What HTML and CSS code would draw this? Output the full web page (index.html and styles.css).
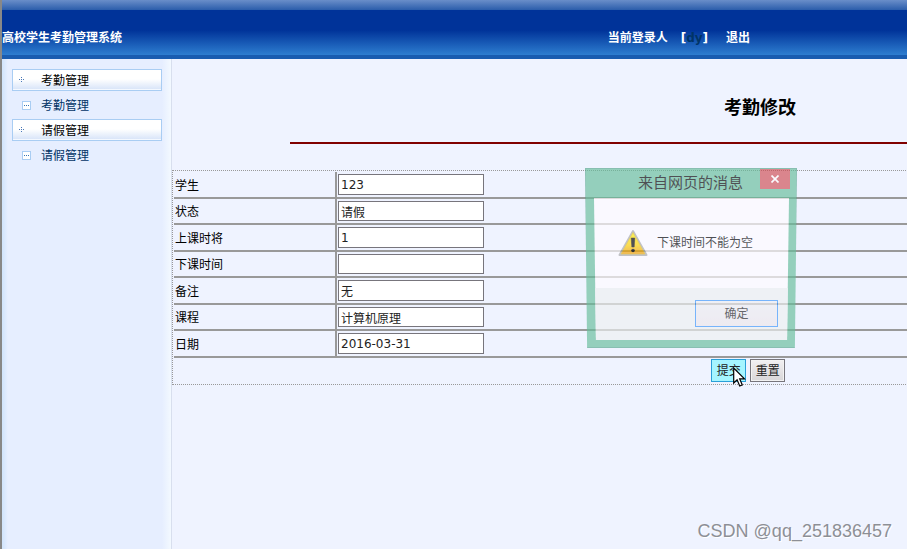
FILE: index.html
```html
<!DOCTYPE html>
<html lang="zh-CN">
  <head>
    <meta charset="utf-8">
    <title>高校学生考勤管理系统</title>
    <link rel="stylesheet" href="styles.css">
  </head>
  <body>
    <div class="page">
      <header class="header">
        <div class="header-strip"></div>
        <div class="header-bar">
          <span class="site-name">高校学生考勤管理系统</span>
          <div class="user">
            <span>当前登录人</span>
            <span>[<span class="user-name">dy</span>]</span>
            <a class="logout" href="#">退出</a>
          </div>
        </div>
      </header>

      <div class="content">
        <nav class="sidebar">
          <a class="menu-title" href="#">
            <svg class="menu-icon" width="5" height="5" viewBox="0 0 5 5" fill="#4a78b8">
              <path d="M2 0h1v1h-1zM0 2h1v1h-1zM2 2h1v1h-1zM4 2h1v1h-1zM2 4h1v1h-1z" />
            </svg>
            考勤管理
          </a>
          <a class="menu-item" href="#">
            <svg class="menu-icon" width="9" height="9" viewBox="0 0 9 9">
              <rect x=".5" y=".5" width="8" height="8" fill="#fff" stroke="#a9cdf3" />
              <path d="M2 4h1v1h-1zM4 4h1v1h-1zM6 4h1v1h-1z" fill="#3674b5" />
            </svg>
            考勤管理
          </a>
          <a class="menu-title" href="#">
            <svg class="menu-icon" width="5" height="5" viewBox="0 0 5 5" fill="#4a78b8">
              <path d="M2 0h1v1h-1zM0 2h1v1h-1zM2 2h1v1h-1zM4 2h1v1h-1zM2 4h1v1h-1z" />
            </svg>
            请假管理
          </a>
          <a class="menu-item" href="#">
            <svg class="menu-icon" width="9" height="9" viewBox="0 0 9 9">
              <rect x=".5" y=".5" width="8" height="8" fill="#fff" stroke="#a9cdf3" />
              <path d="M2 4h1v1h-1zM4 4h1v1h-1zM6 4h1v1h-1z" fill="#3674b5" />
            </svg>
            请假管理
          </a>
        </nav>

        <main class="main">
          <h2>考勤修改</h2>
          <hr>
          <form>
            <table class="form-table">
              <tr>
                <td class="label"><label for="student">学生</label></td>
                <td><input type="text" id="student" value="123"></td>
              </tr>
              <tr>
                <td class="label"><label for="status">状态</label></td>
                <td><input type="text" id="status" value="请假"></td>
              </tr>
              <tr>
                <td class="label"><label for="start">上课时将</label></td>
                <td><input type="text" id="start" value="1"></td>
              </tr>
              <tr>
                <td class="label"><label for="end">下课时间</label></td>
                <td><input type="text" id="end" value=""></td>
              </tr>
              <tr>
                <td class="label"><label for="remark">备注</label></td>
                <td><input type="text" id="remark" value="无"></td>
              </tr>
              <tr>
                <td class="label"><label for="course">课程</label></td>
                <td><input type="text" id="course" value="计算机原理"></td>
              </tr>
              <tr>
                <td class="label"><label for="date">日期</label></td>
                <td><input type="text" id="date" value="2016-03-31"></td>
              </tr>
              <tr>
                <td class="actions" colspan="2">
                  <div class="buttons">
                    <button class="button submit" type="button">提交
                      <svg class="cursor" width="13" height="20" viewBox="0 0 13 20">
                        <path d="M.7 1v15l3.4-3.3 2.6 6.3 2.6-1.1-2.6-6h4.8z" fill="#fff" stroke="#000" stroke-width="1.2" />
                      </svg>
                    </button>
                    <button class="button" type="reset">重置</button>
                  </div>
                </td>
              </tr>
            </table>
          </form>
        </main>
      </div>
    </div>

    <div class="dialog" role="dialog" aria-labelledby="dialog-title">
      <div class="dialog-head">
        <span id="dialog-title">来自网页的消息</span>
        <button class="close" type="button" aria-label="关闭">
          <svg width="8" height="8" viewBox="0 0 8 8">
            <path d="M.5.5l7 7M7.5.5l-7 7" stroke="#fff" stroke-width="1.7" />
          </svg>
        </button>
      </div>
      <div class="dialog-body">
        <div class="message">
          <svg width="30" height="28" viewBox="0 0 30 28">
            <defs>
              <linearGradient id="warn" x1="0" y1="0" x2="0" y2="1">
                <stop offset="0" stop-color="#fff000" />
                <stop offset=".6" stop-color="#ffd000" />
                <stop offset="1" stop-color="#f09800" />
              </linearGradient>
            </defs>
            <path d="M15 2L28.5 26h-27z" fill="#ddd" stroke="#aaa" stroke-width="2" stroke-linejoin="round" />
            <path d="M15 3.5L27 25h-24z" fill="url(#warn)" stroke="#e0b800" stroke-width=".6" />
            <path d="M13.2 9h3.6l-.6 9h-2.4z" fill="#000" stroke="#000" stroke-width=".5" />
            <circle cx="15" cy="21.5" r="1.8" fill="#000" />
          </svg>
          <span>下课时间不能为空</span>
        </div>
        <div class="dialog-foot">
          <button class="ok" type="button">确定</button>
        </div>
      </div>
    </div>

    <div class="watermark">CSDN @qq_251836457</div>
  </body>
</html>
```

FILE: styles.css
```css
* {
  box-sizing: border-box;
}
body {
  margin: 0;
  min-height: 100vh;
  overflow: hidden;
  border-left: 2px solid #888;
  background-color: #eff3ff;
  font-family: "DejaVu Sans", "Noto Sans CJK SC", sans-serif;
  font-size: 12px;
  line-height: 16px;
  color: #000;
}
a {
  text-decoration: none;
}
button,
input {
  font: inherit;
  color: #222;
}
.page {
  display: flex;
  flex-direction: column;
  min-width: 1346px;
  min-height: 100vh;
}

/* header */
.header-strip {
  height: 10px;
  background: linear-gradient(#6a8ec9, #2b5dab);
}
.header-bar {
  display: flex;
  align-items: center;
  height: 49px;
  padding-top: 10px;
  border-bottom: 4px solid #195cb0;
  background: linear-gradient(#003399 45%, #2e7ed0);
  color: #fff;
  font-weight: bold;
}
.site-name {
  width: 45%;
}
.user {
  display: flex;
}
.user > span {
  margin-right: 13px;
}
.user-name {
  color: #003366;
}
.logout {
  margin-left: 5px;
  color: #fff;
}

/* left menu */
.content {
  display: flex;
  flex: 1;
}
.sidebar {
  flex: none;
  width: 170px;
  padding: 10px;
  border-right: 1px solid #d8dfee;
  background: linear-gradient(to right, #d0e4fc, #e6eeff 6px, #e6eeff 160px, #f3f9ff 169px);
}
.menu-title,
.menu-item {
  display: flex;
  align-items: center;
  position: relative;
  width: 150px;
  padding-top: 2px;
  padding-left: 29px;
}
.menu-title {
  height: 22px;
  padding-left: 28px;
  border: 1px solid #a9cdf3;
  background: linear-gradient(#fff 45%, #d6e3f8);
  box-shadow: inset 0 -1px #f3f8ff;
  color: #000;
}
.menu-item {
  height: 28px;
  color: #003366;
}
.menu-icon {
  position: absolute;
  left: 10px;
  top: 10px;
}
.menu-title .menu-icon {
  left: 6px;
  top: 7px;
}

/* edit form */
.main {
  flex: 1;
}
h2 {
  margin: 37px 0 22px;
  font-size: 18px;
  line-height: 24px;
  text-align: center;
}
hr {
  width: 80%;
  height: 2px;
  margin: 0 auto 26px;
  border: none;
  background-color: #800000;
}
.form-table {
  width: 98%;
  padding: 1px 1px 0;
  border: 1px dotted #999;
  border-spacing: 0;
}
.form-table tr {
  height: 27px;
}
.form-table tr:nth-child(even) {
  height: 26px;
}
.form-table td {
  padding: 0 1px;
  border-bottom: 2px solid #999;
}
.form-table .label {
  width: 163px;
  padding-top: 2px;
  border-right: 2px solid #999;
}
.form-table .actions {
  padding-top: 1px;
  border-bottom: none;
  vertical-align: top;
}
.form-table input {
  display: block;
  width: 146px;
  height: 21px;
  padding: 0 2px;
  border: 1px solid #77757c;
  background-color: #fff;
}
.form-table tr:nth-child(even) input {
  height: 20px;
}
.buttons {
  display: flex;
  justify-content: center;
  gap: 4px;
}
.button {
  width: 35px;
  height: 23px;
  padding: 0;
  border: 1px solid #77757c;
  background: linear-gradient(#f2f0f2, #d8d6d8);
  box-shadow: inset 0 0 0 1px #f2f2f2;
  white-space: nowrap;
}
.submit {
  position: relative;
  border-color: #2a9fd8;
  background: #a5f5ff;
  box-shadow: none;
}
.cursor {
  position: absolute;
  left: 21px;
  top: 7px;
}

/* alert box, fading out over the form */
.dialog {
  position: absolute;
  left: 585px;
  top: 168px;
  width: 212px;
  padding: 0 7px 7px 8px;
  border: 1px solid #55a68b;
  background-color: #68be9b;
  opacity: 0.67;
  clip-path: polygon(0 0, 100% 0, 99% 100%, 1% 100%);
}
.dialog-head {
  display: flex;
  align-items: flex-start;
  justify-content: flex-end;
  gap: 17px;
  height: 29px;
  font-size: 15px;
  line-height: 29px;
}
.close {
  display: flex;
  align-items: center;
  justify-content: center;
  width: 30px;
  height: 20px;
  margin-right: -1px;
  padding: 0;
  border: none;
  background-color: #cf4f55;
}
.dialog-body {
  background-color: #fffcff;
  clip-path: polygon(0 0, 100% 0, 99% 100%, 1% 100%);
}
.message {
  display: flex;
  align-items: center;
  gap: 9px;
  height: 90px;
  padding-left: 24px;
}
.dialog-foot {
  display: flex;
  justify-content: flex-end;
  padding: 12px 11px 13px;
  background-color: #eef0f1;
}
.ok {
  width: 83px;
  height: 27px;
  border: 1px solid #3c96fa;
  background: linear-gradient(#efeff2, #ece6ea);
}

.watermark {
  position: absolute;
  right: 15px;
  bottom: 8px;
  font-family: "Liberation Sans", sans-serif;
  font-size: 18px;
  line-height: 20px;
  color: #8d8f96;
  text-shadow: 1px 1px #fff;
}
```
